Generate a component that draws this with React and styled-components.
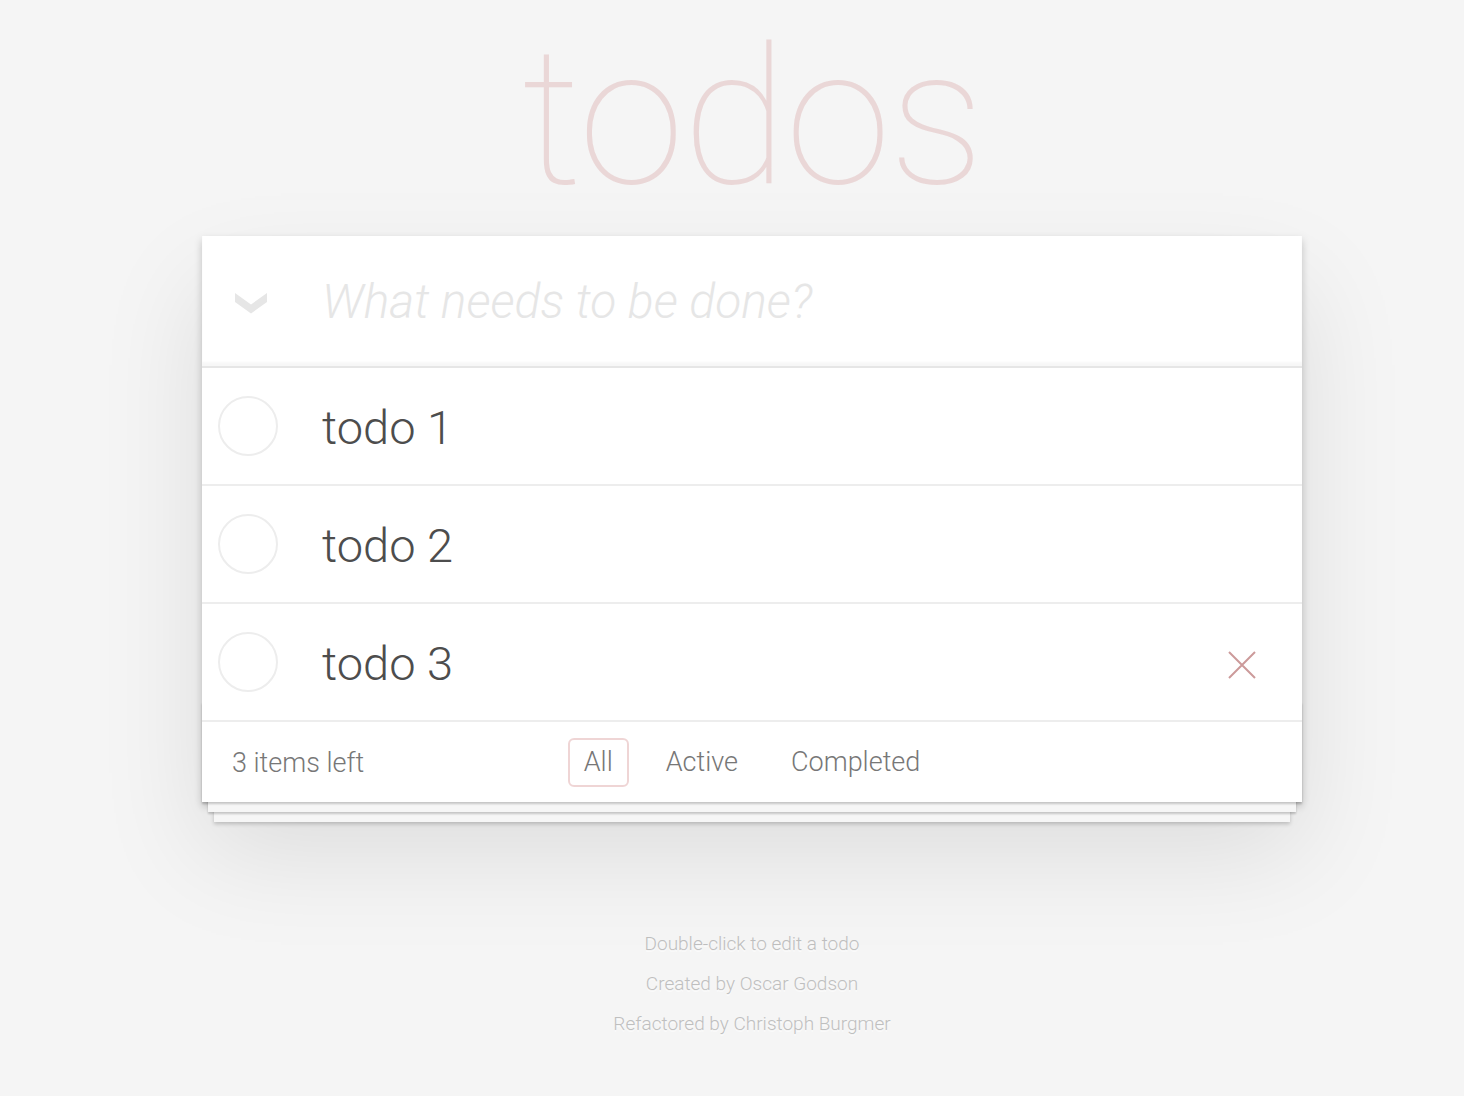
import React from 'react';
import styled, { createGlobalStyle } from 'styled-components';

const GlobalStyle = createGlobalStyle`
  html, body {
    margin: 0;
    padding: 0;
    background: #f5f5f5;
  }
  body {
    font-family: Roboto, "Helvetica Neue", "Liberation Sans", sans-serif;
    font-weight: 300;
    color: #4d4d4d;
    -webkit-font-smoothing: antialiased;
  }
`;

const Page = styled.div`
  min-height: 1096px;
  box-sizing: border-box;
  padding: 3px 0 40px 40px;
  display: flex;
  flex-direction: column;
  align-items: center;
`;

const Title = styled.h1`
  margin: 0;
  font-size: 192px;
  line-height: 230px;
  font-weight: 100;
  color: rgba(175, 47, 47, 0.15);
  text-align: center;
  letter-spacing: -2px;
`;

const Card = styled.section`
  width: 1100px;
  margin-top: 3px;
  background: #fff;
  position: relative;
  box-shadow: 0 4px 8px 0 rgba(0, 0, 0, 0.2), 0 50px 100px 0 rgba(0, 0, 0, 0.1);
`;

const Header = styled.header`
  display: flex;
  align-items: center;
  height: 130px;
  box-shadow: inset 0 -4px 2px rgba(0, 0, 0, 0.03);
  border-bottom: 2px solid #e6e6e6;
`;

const ToggleAll = styled.button`
  width: 98px;
  height: 100%;
  padding: 0;
  border: none;
  background: none;
  display: flex;
  align-items: center;
  justify-content: center;
  svg { margin-top: 4px; }
`;

const NewTodo = styled.input`
  flex: 1;
  border: none;
  outline: none;
  background: transparent;
  padding: 0 32px 0 22px;
  font-family: inherit;
  font-size: 48px;
  line-height: 67px;
  font-weight: 300;
  color: #4d4d4d;
  &::placeholder {
    font-style: italic;
    font-weight: 300;
    color: #e6e6e6;
  }
`;

const List = styled.ul`
  margin: 0;
  padding: 0;
  list-style: none;
`;

const Item = styled.li`
  display: flex;
  align-items: center;
  border-bottom: 2px solid #ededed;
  height: 116px;
`;

const Check = styled.span`
  width: 60px;
  height: 60px;
  box-sizing: border-box;
  margin-left: 16px;
  border: 2px solid #ededed;
  border-radius: 50%;
  flex-shrink: 0;
`;

const Label = styled.label`
  margin-left: 44px;
  padding-top: 4px;
  font-size: 47px;
  line-height: 58px;
  font-weight: 300;
  color: #4d4d4d;
  flex: 1;
`;

const Destroy = styled.button`
  width: 80px;
  height: 80px;
  margin-right: 20px;
  padding: 6px 0 0;
  border: none;
  background: none;
  display: flex;
  align-items: center;
  justify-content: center;
  visibility: ${p => (p.$shown ? 'visible' : 'hidden')};
`;

const Footer = styled.footer`
  position: relative;
  height: 80px;
  box-sizing: border-box;
  padding: 0 30px;
  display: grid;
  grid-template-columns: 1fr auto 1fr;
  align-items: center;
  color: #777;
  font-size: 27px;

  &::before {
    content: '';
    position: absolute;
    left: 0;
    right: 0;
    bottom: 0;
    height: 100px;
    overflow: hidden;
    box-shadow: 0 2px 2px rgba(0, 0, 0, 0.2),
      0 16px 0 -6px #f6f6f6,
      0 18px 2px -6px rgba(0, 0, 0, 0.2),
      0 32px 0 -12px #f6f6f6,
      0 34px 4px -12px rgba(0, 0, 0, 0.2);
    pointer-events: none;
  }
`;

const Count = styled.span`
  line-height: 40px;
  padding-top: 2px;
`;

const Filters = styled.ul`
  margin: 0;
  padding: 0;
  list-style: none;
  display: flex;
  gap: 21px;
`;

const Filter = styled.a`
  display: block;
  padding: 6px 14px;
  line-height: 33px;
  border: 2px solid ${p => (p.$selected ? 'rgba(175, 47, 47, 0.2)' : 'transparent')};
  border-radius: 6px;
  color: inherit;
  text-decoration: none;
`;

const Info = styled.footer`
  margin-top: 112px;
  text-align: center;
  color: #bfbfbf;
  font-size: 19px;
  text-shadow: 0 2px 0 rgba(255, 255, 255, 0.5);

  p {
    margin: 20px 0;
    line-height: 20px;
  }
`;

function Chevron() {
  return (
    <svg width="32" height="21" viewBox="0 0 32 21">
      <polygon points="0,0 16,11.5 32,0 32,9 16,20.5 0,9" fill="#e6e6e6" />
    </svg>
  );
}

function Cross() {
  return (
    <svg width="28" height="28" viewBox="0 0 28 28">
      <path d="M1 1 L27 27 M27 1 L1 27" stroke="#cc9a9a" strokeWidth="2" fill="none" />
    </svg>
  );
}

const todos = ['todo 1', 'todo 2', 'todo 3'];

export default function App() {
  return (
    <>
      <GlobalStyle />
      <Page>
        <Title>todos</Title>
        <Card>
          <Header>
            <ToggleAll aria-label="Mark all as complete">
              <Chevron />
            </ToggleAll>
            <NewTodo placeholder="What needs to be done?" />
          </Header>
          <List>
            {todos.map((t, i) => (
              <Item key={t}>
                <Check />
                <Label>{t}</Label>
                <Destroy $shown={i === 2} aria-label="Delete">
                  <Cross />
                </Destroy>
              </Item>
            ))}
          </List>
          <Footer>
            <Count>3 items left</Count>
            <Filters>
              <li><Filter href="#/" $selected>All</Filter></li>
              <li><Filter href="#/active">Active</Filter></li>
              <li><Filter href="#/completed">Completed</Filter></li>
            </Filters>
            <span />
          </Footer>
        </Card>
        <Info>
          <p>Double-click to edit a todo</p>
          <p>Created by Oscar Godson</p>
          <p>Refactored by Christoph Burgmer</p>
        </Info>
      </Page>
    </>
  );
}
